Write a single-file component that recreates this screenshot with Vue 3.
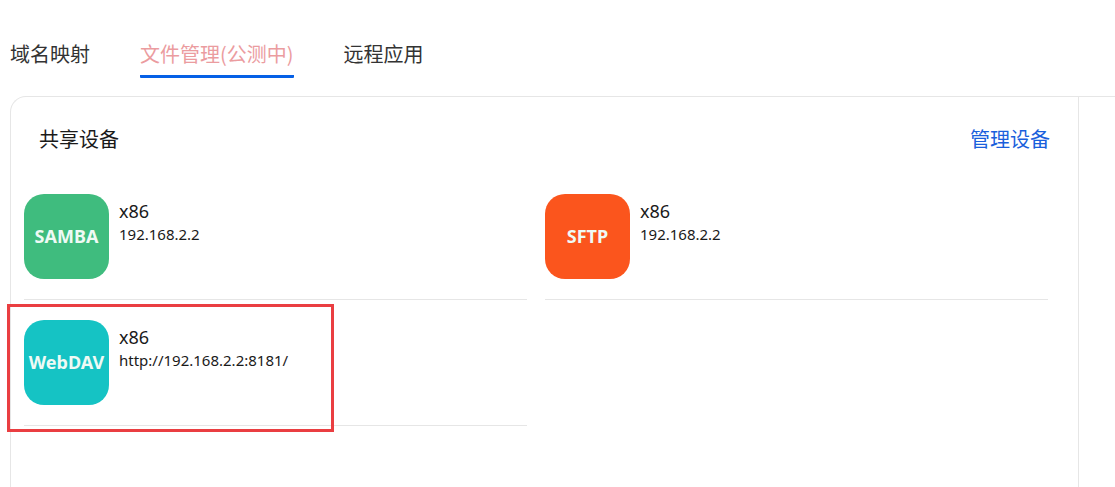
<script setup>
import { ref } from 'vue'

const tabs = ['域名映射', '文件管理(公测中)', '远程应用']
const active = ref(1)

const devices = [
  { kind: 'SAMBA', tone: 'samba', name: 'x86', address: '192.168.2.2' },
  { kind: 'SFTP', tone: 'sftp', name: 'x86', address: '192.168.2.2' },
  { kind: 'WebDAV', tone: 'webdav', name: 'x86', address: 'http://192.168.2.2:8181/', marked: true }
]
</script>

<template>
  <div class="page">
    <nav class="tabs">
      <button
        v-for="(tab, i) in tabs"
        :key="tab"
        type="button"
        class="tab"
        :class="{ active: i === active }"
        @click="active = i"
      >{{ tab }}</button>
    </nav>
    <main class="frame">
      <section class="panel">
        <header class="head">
          <h1 class="title">共享设备</h1>
          <a class="manage" href="#">管理设备</a>
        </header>
        <ul class="grid">
          <li v-for="device in devices" :key="device.kind" class="device">
            <span class="badge" :class="device.tone">{{ device.kind }}</span>
            <div class="info">
              <div class="name">{{ device.name }}</div>
              <div class="address">{{ device.address }}</div>
            </div>
            <span v-if="device.marked" class="marker"></span>
          </li>
        </ul>
      </section>
    </main>
  </div>
</template>

<style>
body {
  margin: 0;
  background: #fff;
}
</style>

<style scoped>
.page {
  box-sizing: border-box;
  min-height: 100vh;
  display: flex;
  flex-direction: column;
  padding: 38px 0 0 10px;
  overflow: hidden;
  font-family: "Noto Sans CJK SC", sans-serif;
  color: #1a1a1a;
}
.tabs {
  display: flex;
  gap: 50px;
  margin-bottom: 18px;
}
.tab {
  padding: 0 0 5px;
  border: 0;
  border-bottom: 3px solid transparent;
  background: none;
  font: inherit;
  font-size: 20px;
  line-height: 32px;
  color: #333;
  white-space: nowrap;
  cursor: pointer;
}
.tab.active {
  color: #eb9c9f;
  border-bottom-color: #0560e6;
  border-radius: 1px;
}
.frame {
  flex: 1;
  display: flex;
  padding-right: 36px;
  border-top: 1px solid #e6e6e6;
  border-left: 1px solid #e6e6e6;
  border-top-left-radius: 16px;
}
.panel {
  flex: 1;
  border-right: 1px solid #e6e6e6;
}
.head {
  display: flex;
  justify-content: space-between;
  align-items: center;
  padding: 26px 28px 0;
}
.title,
.manage {
  margin: 0;
  font-size: 20px;
  line-height: 32px;
  font-weight: 400;
}
.manage {
  color: #1a5fdc;
  text-decoration: none;
}
.grid {
  display: grid;
  grid-template-columns: 1fr 1fr;
  column-gap: 18px;
  row-gap: 20px;
  margin: 0;
  padding: 39px 30px 0 13px;
  list-style: none;
}
.device {
  position: relative;
  display: flex;
  gap: 10px;
  padding-bottom: 20px;
  border-bottom: 1px solid #e6e6e6;
}
.badge {
  flex: none;
  box-sizing: border-box;
  display: flex;
  align-items: center;
  justify-content: center;
  width: 85px;
  height: 85px;
  padding-bottom: 2px;
  border-radius: 20px;
  font-family: "Noto Sans", sans-serif;
  font-size: 18px;
  font-weight: 700;
  color: #effaf5;
}
.samba {
  background: #3fbc7e;
}
.sftp {
  background: #fb551d;
}
.webdav {
  background: #15c3c4;
}
.info {
  padding-top: 5px;
  font-family: "Noto Sans", sans-serif;
}
.name {
  font-size: 18px;
  line-height: 24px;
}
.address {
  font-size: 15px;
  line-height: 22px;
}
.marker {
  position: absolute;
  top: -16px;
  left: -17px;
  box-sizing: border-box;
  width: 327px;
  height: 128px;
  border: 3px solid #ea3e41;
  pointer-events: none;
}
</style>
